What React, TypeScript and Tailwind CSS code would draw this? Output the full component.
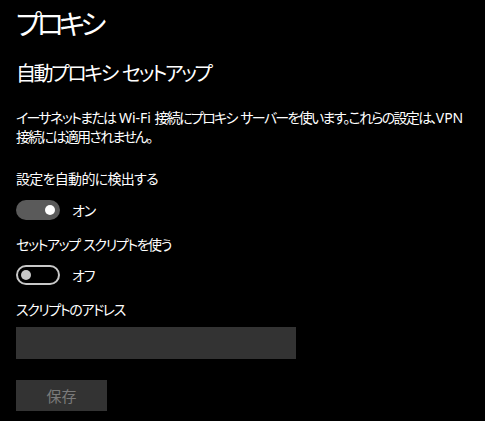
import React from 'react';

// Windows 10 settings: Proxy page (dark theme)

const Sp = () => <span className="tracking-normal"> </span>;
const Latin = ({ children }: { children: React.ReactNode }) => (
  <span className="tracking-[0px]">{children}</span>
);

function Toggle({ on, label }: { on: boolean; label: string }) {
  return (
    <div className="flex items-center h-[20px]">
      {on ? (
        <div className="w-[44px] h-[20px] rounded-full bg-[#5a5a5a] flex items-center justify-end pr-[5px]">
          <div className="w-[10px] h-[10px] rounded-full bg-white" />
        </div>
      ) : (
        <div className="w-[44px] h-[20px] rounded-full border-2 border-[#c8c8c8] flex items-center pl-[3px]">
          <div className="w-[10px] h-[10px] rounded-full bg-[#c8c8c8]" />
        </div>
      )}
      <span className="ml-[12px] text-[14px] leading-[19px] tracking-[-1px] text-white">{label}</span>
    </div>
  );
}

export default function App() {
  return (
    <div className="w-[485px] h-[421px] bg-black text-white pl-4 pt-[6px] overflow-hidden font-['Noto_Sans','Noto_Sans_CJK_JP',sans-serif] [font-feature-settings:'palt']">
      {/* Page title */}
      <h1 className="text-[28px] leading-[36px] font-normal tracking-[-5px]">プロキシ</h1>

      {/* Section heading */}
      <h2 className="mt-[18px] text-[20px] leading-[28px] font-normal tracking-[-2.4px]">
        自動プロキシ<Sp />セットアップ
      </h2>

      {/* Description */}
      <p className="mt-[20px] text-[14px] leading-[19px] tracking-[-1.7px]">
        <span className="whitespace-nowrap">
          イーサネットまたは<Sp /><Latin>Wi-Fi</Latin><Sp />接続にプロキシ<Sp />サーバーを使います。これらの設定は、<Latin>VPN</Latin>
        </span>
        <br />
        <span className="whitespace-nowrap">接続には適用されません。</span>
      </p>

      {/* Auto detect */}
      <div className="mt-[23px] text-[14px] leading-[19px] tracking-[-0.7px]">設定を自動的に検出する</div>
      <div className="mt-[12px]">
        <Toggle on label="オン" />
      </div>

      {/* Setup script */}
      <div className="mt-[15px] text-[14px] leading-[19px] tracking-[-1.4px]">
        セットアップ<Sp />スクリプトを使う
      </div>
      <div className="mt-[11px]">
        <Toggle on={false} label="オフ" />
      </div>

      <div className="mt-[15px] text-[14px] leading-[19px] tracking-[-1.4px]">スクリプトのアドレス</div>
      <div className="mt-[8px] w-[280px] h-[32px] bg-[#333333]" />

      <button
        disabled
        className="mt-[21px] w-[91px] h-[31px] bg-[#333333] text-[#7a7a7a] text-[15px] leading-[20px] flex items-center justify-center"
      >
        保存
      </button>
    </div>
  );
}
